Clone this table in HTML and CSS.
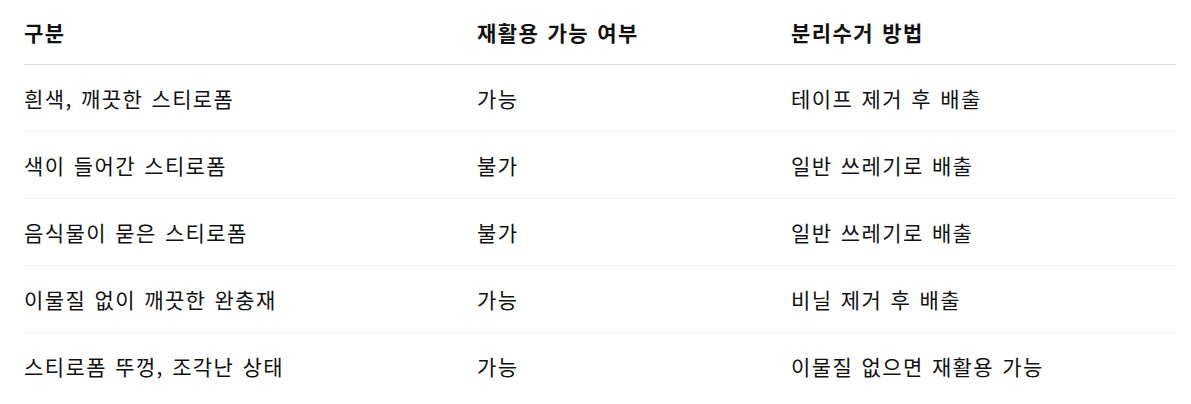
FILE: index.html
```html
<!DOCTYPE html>
<html lang="ko">
<head>
<meta charset="utf-8">
<link rel="stylesheet" href="styles.css">
</head>
<body>
<table class="tbl">
  <colgroup><col class="c1"><col class="c2"><col class="c3"></colgroup>
  <thead>
    <tr><th>구분</th><th>재활용 가능 여부</th><th>분리수거 방법</th></tr>
  </thead>
  <tbody>
    <tr><td>흰색, 깨끗한 스티로폼</td><td>가능</td><td>테이프 제거 후 배출</td></tr>
    <tr><td>색이 들어간 스티로폼</td><td>불가</td><td>일반 쓰레기로 배출</td></tr>
    <tr><td>음식물이 묻은 스티로폼</td><td>불가</td><td>일반 쓰레기로 배출</td></tr>
    <tr><td>이물질 없이 깨끗한 완충재</td><td>가능</td><td>비닐 제거 후 배출</td></tr>
    <tr><td>스티로폼 뚜껑, 조각난 상태</td><td>가능</td><td>이물질 없으면 재활용 가능</td></tr>
  </tbody>
</table>
</body>
</html>
```
FILE: styles.css
```css
html, body { margin: 0; padding: 0; background: #fff; }
body {
  padding: 0 15px 0 24px;
  font-family: "Noto Sans CJK KR", "Noto Sans", sans-serif;
  color: #111;
  font-size: 21px;
}
.tbl {
  border-collapse: collapse;
  table-layout: fixed;
  width: 1152px;
}
.c1 { width: 453px; }
.c2 { width: 314px; }
.c3 { width: 385px; }
.tbl th, .tbl td {
  text-align: left;
  padding: 0;
  white-space: nowrap;
  letter-spacing: 1.4px;
  word-spacing: 1px;
}
.tbl th {
  height: 64px;
  font-weight: 700;
  border-bottom: 1px solid #d9d9d9;
}
.tbl td {
  height: 66px;
  font-weight: 400;
  border-bottom: 1px solid #efefef;
}
.tbl tbody tr:last-child td { border-bottom: none; }
```
